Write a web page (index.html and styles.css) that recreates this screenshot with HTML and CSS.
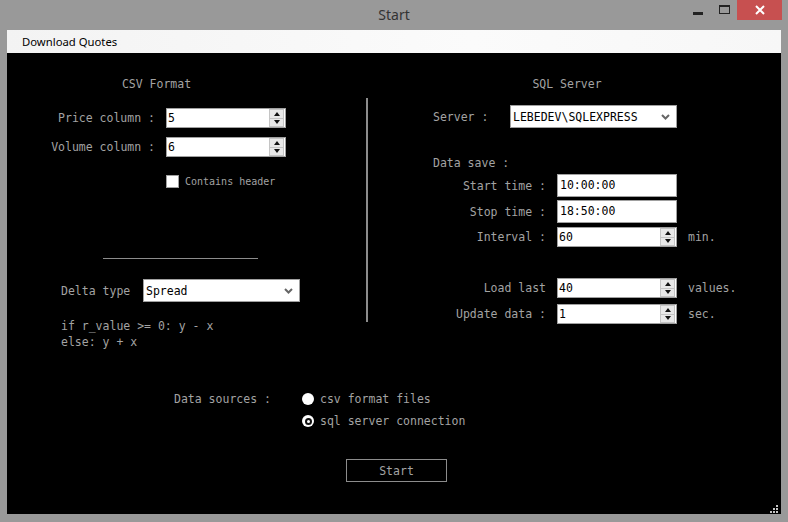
FILE: index.html
```html
<!DOCTYPE html>
<html>
<head>
<meta charset="utf-8">
<title>Start</title>
<link rel="stylesheet" href="styles.css">
</head>
<body>
<div class="window">
  <div class="titlebar">
    <div></div>
    <div class="title">Start</div>
    <div class="controls">
      <span class="wbtn"><span class="min-glyph"></span></span>
      <span class="wbtn"><span class="max-glyph"></span></span>
      <span class="wbtn close">
        <svg width="10" height="10" viewBox="0 0 10 10"><path d="M1 1 L9 9 M9 1 L1 9" stroke="#fff" stroke-width="2"/></svg>
      </span>
    </div>
  </div>
  <div class="menubar"><span class="menu-item">Download Quotes</span></div>
  <div class="client">
    <div class="panels">
      <section class="panel csv">
        <div class="heading csv-heading">CSV Format</div>
        <div class="csv-grid">
          <label class="lbl">Price column :</label>
          <div class="spin"><span class="val">5</span><span class="spin-btns"><span class="sb up"></span><span class="sb down"></span></span></div>
          <label class="lbl">Volume column :</label>
          <div class="spin"><span class="val">6</span><span class="spin-btns"><span class="sb up"></span><span class="sb down"></span></span></div>
        </div>
        <div class="check-row"><span class="checkbox"></span><span class="lbl small">Contains header</span></div>
        <div class="hr"></div>
        <div class="delta-row">
          <span class="lbl">Delta type</span>
          <div class="select wide"><span class="val">Spread</span><svg class="chev" width="9" height="6" viewBox="0 0 9 6"><path d="M1 1 L4.5 4.5 L8 1" fill="none" stroke="#666" stroke-width="2"/></svg></div>
        </div>
        <div class="formula">if r_value &gt;= 0: y - x<br>else: y + x</div>
      </section>
      <div class="divider"></div>
      <section class="panel sql">
        <div class="heading sql-heading">SQL Server</div>
        <div class="server-row">
          <span class="lbl">Server :</span>
          <div class="select server"><span class="val">LEBEDEV\SQLEXPRESS</span><svg class="chev" width="9" height="6" viewBox="0 0 9 6"><path d="M1 1 L4.5 4.5 L8 1" fill="none" stroke="#666" stroke-width="2"/></svg></div>
        </div>
        <div class="lbl save-title">Data save :</div>
        <div class="sql-grid">
          <span class="lbl r23">Start time :</span>
          <div class="text-input">10:00:00</div>
          <span></span>
          <span class="lbl r23 g3">Stop time :</span>
          <div class="text-input g3">18:50:00</div>
          <span class="g3"></span>
          <span class="lbl g4">Interval :</span>
          <div class="spin g4"><span class="val">60</span><span class="spin-btns"><span class="sb up"></span><span class="sb down"></span></span></div>
          <span class="lbl unit g4">min.</span>
          <span class="lbl g31">Load last</span>
          <div class="spin g31"><span class="val">40</span><span class="spin-btns"><span class="sb up"></span><span class="sb down"></span></span></div>
          <span class="lbl unit g31">values.</span>
          <span class="lbl g6">Update data :</span>
          <div class="spin g6"><span class="val">1</span><span class="spin-btns"><span class="sb up"></span><span class="sb down"></span></span></div>
          <span class="lbl unit g6">sec.</span>
        </div>
      </section>
    </div>
    <div class="sources">
      <span class="lbl">Data sources :</span>
      <div class="radio-row"><span class="radio"></span><span class="lbl">csv format files</span></div>
      <span></span>
      <div class="radio-row"><span class="radio checked"><span class="dot"></span></span><span class="lbl">sql server connection</span></div>
    </div>
    <div class="actions"><button class="start-btn">Start</button></div>
    <svg class="grip" width="8" height="8" viewBox="0 0 8 8">
      <rect x="6" y="0" width="2" height="2" fill="#c4c4c4"/>
      <rect x="3" y="3" width="2" height="2" fill="#c4c4c4"/>
      <rect x="6" y="3" width="2" height="2" fill="#c4c4c4"/>
      <rect x="0" y="6" width="2" height="2" fill="#c4c4c4"/>
      <rect x="3" y="6" width="2" height="2" fill="#c4c4c4"/>
      <rect x="6" y="6" width="2" height="2" fill="#c4c4c4"/>
    </svg>
  </div>
</div>
</body>
</html>
```

FILE: styles.css
```css
* { box-sizing: border-box; }
html, body { margin: 0; padding: 0; }
body { background: #999999; width: 788px; height: 522px; overflow: hidden; }

.window { width: 788px; height: 522px; background: #999999; }

.titlebar {
  height: 30px;
  display: grid;
  grid-template-columns: 1fr auto 1fr;
  align-items: start;
}
.title {
  font-family: "Noto Sans", "Open Sans", sans-serif;
  font-size: 14px;
  color: #333;
  line-height: 30px;
}
.controls { justify-self: end; display: flex; margin-right: 6px; }
.wbtn { width: 26px; height: 20px; display: flex; align-items: center; justify-content: center; position: relative; }
.min-glyph { width: 10px; height: 3px; background: #222; margin-top: 6px; }
.max-glyph { width: 11px; height: 9px; border: 1px solid #222; border-top-width: 2px; margin-top: -1px; }
.wbtn.close { width: 45px; background: #c75050; }

.menubar {
  margin: 0 7px;
  height: 23px;
  background: linear-gradient(to right, #f3f3f3, #fbfbfb 60%, #f7f7f7);
  display: flex;
  align-items: center;
  padding-left: 15px;
}
.menu-item {
  font-family: "Noto Sans", "Open Sans", sans-serif;
  font-size: 11.3px;
  color: #000;
}

.client {
  margin: 0 7px;
  height: 461px;
  background: #000;
  position: relative;
  font-family: "DejaVu Sans Mono", "Liberation Mono", monospace;
  font-size: 11.5px;
}

.lbl { color: #a3a3a3; white-space: pre; }
.lbl.small { font-size: 10px; }

.panels { display: flex; height: 335px; }
.panel.csv { width: 359px; }
.panel.sql { flex: 1; }
.divider { width: 2px; height: 224px; margin-top: 45px; background: #8c8c8c; }

.heading { color: #a3a3a3; padding-top: 24px; line-height: 14px; text-align: center; }
.csv-heading { width: 299px; }
.sql-heading { width: 398px; }

.csv-grid {
  margin-top: 17px;
  display: grid;
  grid-template-columns: 148px 120px;
  column-gap: 11px;
  row-gap: 9px;
  align-items: center;
}
.csv-grid .lbl { text-align: right; }

.spin {
  height: 20px;
  background: #fff;
  border: 1px solid #a0a0a0;
  display: flex;
  align-items: center;
  justify-content: space-between;
  color: #000;
  padding-left: 1px;
}
.spin .val { line-height: 18px; }
.spin-btns { display: flex; flex-direction: column; width: 15px; height: 18px; margin-right: 1px; gap: 0; }
.sb {
  flex: 1;
  background: #e8e8e8;
  border: 1px solid #c4c4c4;
  position: relative;
}
.sb.up { border-bottom: none; }
.sb::after {
  content: "";
  position: absolute;
  left: 50%;
  top: 50%;
  transform: translate(-50%, -50%);
  border-left: 3.5px solid transparent;
  border-right: 3.5px solid transparent;
}
.sb.up::after { border-bottom: 4px solid #111; }
.sb.down::after { border-top: 4px solid #111; }

.check-row { margin-top: 18px; margin-left: 159px; display: flex; align-items: center; gap: 6px; height: 13px; }
.checkbox { width: 13px; height: 13px; background: #fff; border: 1px solid #a0a0a0; }

.hr { margin-top: 70px; margin-left: 96px; width: 155px; height: 1px; background: #8c8c8c; }

.delta-row {
  margin-top: 20px;
  margin-left: 54px;
  display: grid;
  grid-template-columns: 82px 157px;
  align-items: center;
}
.select {
  height: 23px;
  background: #fff;
  border: 1px solid #a0a0a0;
  display: flex;
  align-items: center;
  justify-content: space-between;
  color: #000;
  padding-left: 2px;
  padding-right: 6px;
}
.select.wide { width: 157px; }
.select.server { width: 167px; }
.chev { display: block; }

.formula { margin-top: 16px; margin-left: 54px; line-height: 16px; color: #a3a3a3; }

.server-row {
  margin-top: 14px;
  margin-left: 65px;
  display: grid;
  grid-template-columns: 77px 167px;
  align-items: center;
}
.save-title { margin-top: 28px; margin-left: 65px; line-height: 14px; }

.sql-grid {
  margin-top: 4px;
  margin-left: 65px;
  display: grid;
  grid-template-columns: 113px 120px auto;
  column-gap: 11px;
  align-items: center;
}
.sql-grid .lbl { text-align: right; }
.sql-grid .lbl.unit { text-align: left; }
.text-input {
  height: 23px;
  background: #fff;
  border: 1px solid #a0a0a0;
  color: #000;
  line-height: 21px;
  padding-left: 2px;
}
.g3 { margin-top: 3px; }
.g4 { margin-top: 4px; }
.g31 { margin-top: 31px; }
.g6 { margin-top: 6px; }

.sources {
  margin-left: 167px;
  display: grid;
  grid-template-columns: 128px auto;
  grid-auto-rows: 22px;
  align-items: center;
}
.radio-row { display: flex; align-items: center; gap: 6px; }
.radio {
  width: 12px; height: 12px; border-radius: 50%; background: #fff;
  display: flex; align-items: center; justify-content: center;
}
.radio .dot { width: 7px; height: 7px; border-radius: 50%; border: 2px solid #111; background: #fff; }

.actions { margin-top: 27px; margin-left: 339px; }
.start-btn {
  width: 101px;
  height: 23px;
  background: #000;
  border: 1px solid #8c8c8c;
  color: #a3a3a3;
  font-family: "DejaVu Sans Mono", "Liberation Mono", monospace;
  font-size: 11.5px;
  padding: 0;
}

.grip { position: absolute; right: 3px; bottom: 1px; }
```
